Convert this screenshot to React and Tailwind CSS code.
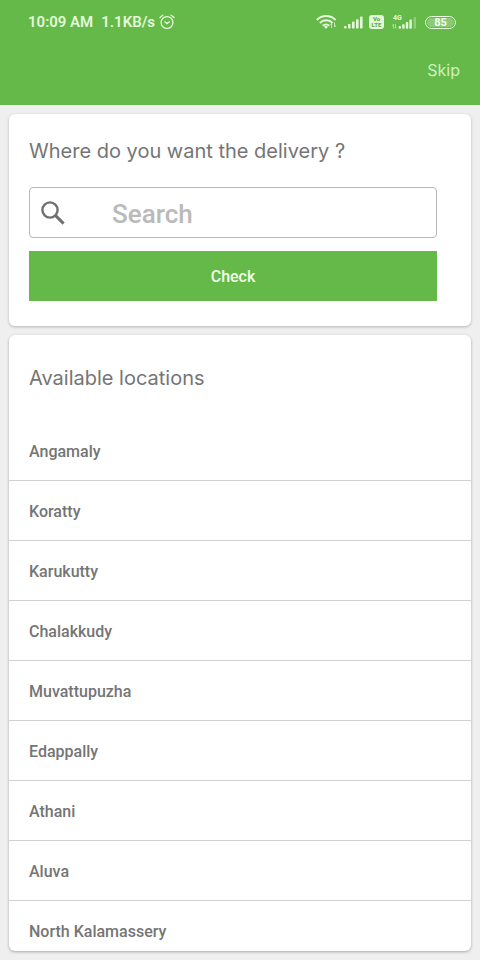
import React from 'react';

const locations = [
  "Angamaly",
  "Koratty",
  "Karukutty",
  "Chalakkudy",
  "Muvattupuzha",
  "Edappally",
  "Athani",
  "Aluva",
  "North Kalamassery"
];

const AlarmIcon = () => (
  <svg className="w-4 h-4" viewBox="0 0 16 16" fill="none" stroke="currentColor" strokeWidth="1.3" strokeLinecap="round">
    <circle cx="8" cy="8.5" r="5.9" />
    <path d="M1 3.6 3.8 1.2M15 3.6 12.2 1.2M5.9 7.8 8 9.6l2.4-1.8" />
  </svg>
);

const WifiIcon = () => (
  <svg className="w-[22px] h-4" viewBox="0 0 22 16" fill="none" stroke="currentColor" strokeWidth="2">
    <path d="M.8 6a13 13 0 0 1 18.8 0M3.8 9a8.8 8.8 0 0 1 12.8 0M6.8 11.8a4.6 4.6 0 0 1 6.4 0" />
    <path d="M8 12.8a2.9 2.9 0 0 1 4 0l-2 2.2z" fill="currentColor" stroke="none" />
    <path d="M15.6 14V9.6M14.4 11l1.2-1.6M18.6 8.4V13M19.8 11.4l-1.2 1.6" strokeWidth="1" opacity="0.75" />
  </svg>
);

const SignalIcon = () => (
  <svg className="w-[19px] h-[13px]" viewBox="0 0 19 13" fill="currentColor">
    <rect x="0" y="10" width="2.6" height="2.6" rx="0.8" />
    <rect x="4" y="8" width="2.6" height="4.6" rx="0.8" />
    <rect x="8" y="5.6" width="2.6" height="7" rx="0.8" />
    <rect x="12" y="3.2" width="2.6" height="9.4" rx="0.8" />
    <rect x="16" y="0.6" width="2.6" height="12" rx="0.8" />
  </svg>
);

const SecondSignalIcon = () => (
  <svg className="w-[25px] h-4" viewBox="0 0 25 16" fill="currentColor">
    <text x="1" y="6" fontSize="7" fontWeight="700" fontFamily="Roboto, sans-serif">4G</text>
    <path d="M1.4 14.6v-4M.6 11.6l.8-1.4M3.4 10v4M4.2 13l-.8 1.4" stroke="currentColor" strokeWidth="0.9" opacity="0.7" />
    <rect x="6.6" y="12" width="2.4" height="2.8" rx="0.8" />
    <rect x="10.2" y="10.2" width="2.4" height="4.6" rx="0.8" />
    <rect x="13.8" y="8" width="2.4" height="6.8" rx="0.8" />
    <rect x="17.4" y="5.6" width="2.4" height="9.2" rx="0.8" />
    <rect x="21.6" y="3" width="2.4" height="11.8" rx="0.8" opacity="0.35" />
  </svg>
);

const StatusBar = () => (
  <div className="h-11 pl-7 pr-6 flex items-center justify-between text-[#e4f8dc] font-[Roboto,sans-serif]">
    <div className="flex items-center text-[15px] font-semibold">
      <span>10:09 AM</span>
      <span className="ml-2">1.1KB/s</span>
      <span className="ml-1"><AlarmIcon /></span>
    </div>
    <div className="flex items-center">
      <WifiIcon />
      <span className="ml-1.5"><SignalIcon /></span>
      <span className="ml-1.5 w-[15px] h-[14px] rounded-[3px] bg-[#e4f8dc] text-[#5fae44] text-[6px] leading-[6px] font-black flex flex-col items-center justify-center">
        <span>Vo</span>
        <span>LTE</span>
      </span>
      <span className="ml-2"><SecondSignalIcon /></span>
      <span className="ml-2 w-[31px] h-[13px] rounded-full border border-[#e4f8dc] p-px flex">
        <span className="flex-1 rounded-full bg-white/25 flex items-center justify-center text-[#f4fff0] text-[11px] leading-none font-bold">85</span>
      </span>
    </div>
  </div>
);

const App = () => {
  return (
    <div className="h-screen flex flex-col bg-[#efefef] font-[Roboto,sans-serif] text-[#757575]">
      <header className="bg-[#65b948] pb-[21px]">
        <StatusBar />
        <div className="flex justify-end px-5 pt-3">
          <button type="button" className="font-[Inter,sans-serif] text-base leading-7 text-[#cdf0bf]">Skip</button>
        </div>
      </header>

      <main className="flex-1 min-h-0 flex flex-col gap-[9px] p-[9px]">
        <form
          className="bg-white rounded-md shadow-[0_1px_3px_rgba(0,0,0,0.25)] pt-[22px] pb-[25px] pl-5 pr-[34px]"
          onSubmit={(e) => e.preventDefault()}
        >
          <h1 className="font-[Inter,sans-serif] text-[20px] leading-[30px]">
            <label htmlFor="search">Where do you want the delivery ?</label>
          </h1>
          <div className="mt-[21px] h-[51px] flex items-center border border-[#b8b8b8] rounded pl-[11px] focus-within:border-[#65b948]">
            <svg className="w-6 h-6 shrink-0" viewBox="0 0 24 24" fill="none" stroke="#707070" strokeWidth="2.4">
              <circle cx="9" cy="9" r="7.6" />
              <path d="M14.4 14.4 22.6 22.6" strokeWidth="3" />
            </svg>
            <input
              id="search"
              type="text"
              placeholder="Search"
              className="ml-[47px] flex-1 min-w-0 pt-1 bg-transparent outline-none text-[26px] font-medium placeholder:text-[#bababa]"
            />
          </div>
          <button type="submit" className="mt-[13px] w-full h-[50px] pt-0.5 bg-[#65b948] text-[#f2ffec] text-base font-medium">
            Check
          </button>
        </form>

        <section className="flex-1 min-h-0 flex flex-col bg-white rounded-md shadow-[0_1px_3px_rgba(0,0,0,0.3)] overflow-hidden">
          <h2 className="font-[Inter,sans-serif] text-[20px] leading-[30px] px-5 py-7">Available locations</h2>
          <ul className="flex-1 min-h-0 overflow-y-auto [scrollbar-width:none]">
            {locations.map((name) => (
              <li key={name} className="h-[60px] flex items-center px-5 pt-0.5 border-b border-[#d2d2d2] text-base font-medium">
                {name}
              </li>
            ))}
          </ul>
        </section>
      </main>
    </div>
  );
};

export default App;
